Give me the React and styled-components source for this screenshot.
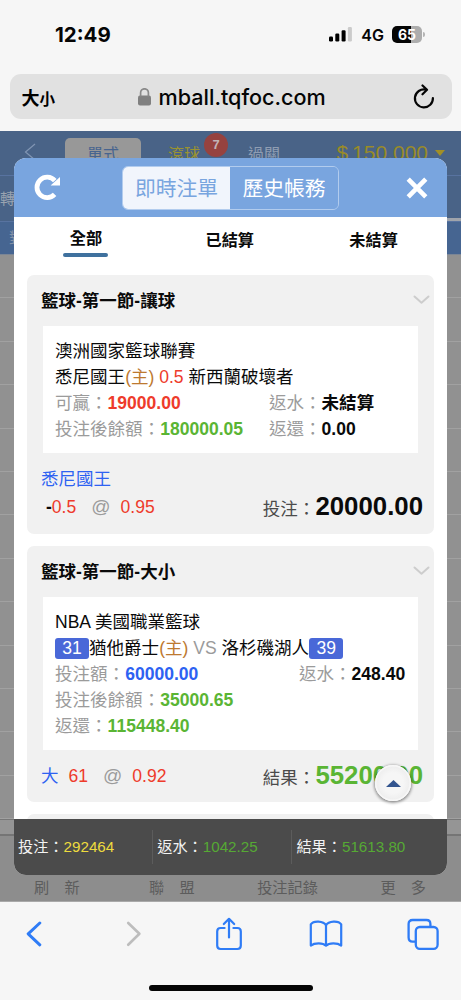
import React from "react";
import styled, { createGlobalStyle } from "styled-components";

const App = () => {
  return (
    <Phone>
      <GlobalStyle />
      <StatusBar>
        <Clock>12:49</Clock>
        <Signal viewBox="0 0 23 15">
          <rect x="0" y="9.5" width="4" height="5" rx="1.2" />
          <rect x="6.3" y="6.5" width="4" height="8" rx="1.2" />
          <rect x="12.6" y="3.2" width="4" height="11.3" rx="1.2" />
          <rect x="18.9" y="0" width="4" height="14.5" rx="1.2" fill="#cbcbcb" />
        </Signal>
        <Network>4G</Network>
        <Battery>65</Battery>
        <BatteryTip />
      </StatusBar>
      <AddressBar>
        <TextSize>
          大<small>小</small>
        </TextSize>
        <Url>
          <svg width="13" height="18" viewBox="0 0 13 18">
            <rect x="0" y="7.6" width="13" height="10" rx="2" fill="#808080" />
            <path
              d="M2.6 8.5V4.7a3.9 3.9 0 0 1 7.8 0v3.8"
              fill="none"
              stroke="#8a8a8a"
              strokeWidth="1.7"
            />
          </svg>
          <span>mball.tqfoc.com</span>
        </Url>
        <svg width="22" height="25" viewBox="0 0 22 25">
          <g fill="none" stroke="#050505" strokeWidth="2.2" strokeLinecap="round" strokeLinejoin="round">
            <path d="M12.9 5.6A9 9 0 1 0 19.9 14" />
            <path d="M9.5 1.5L14 5.8L9.5 10.3" />
          </g>
        </svg>
      </AddressBar>

      <Page>
        <SiteHeader>
          <svg width="12" height="18" viewBox="0 0 12 18">
            <path d="M11 1L1.5 9L11 17" fill="none" stroke="#8195b3" strokeWidth="1.2" />
          </svg>
          <SiteTab $active>單式</SiteTab>
          <SiteTab $live>
            滾球<Count>7</Count>
          </SiteTab>
          <SiteTab>過關</SiteTab>
          <Balance>
            <i>$</i>150,000
          </Balance>
        </SiteHeader>
        <SiteSub>轉</SiteSub>
        <SiteDivider />
        <SiteHead>對</SiteHead>
        <SiteRows>
          {Array.from({ length: 13 }, (_, i) => (
            <SiteRow key={i} />
          ))}
        </SiteRows>
        <SiteStrip />
        <SiteNav>
          <span>刷　新</span>
          <span>聯　盟</span>
          <span>投注記錄</span>
          <span>更　多</span>
        </SiteNav>

        <Modal>
          <ModalHeader>
            <svg width="27" height="27" viewBox="0 0 27 27">
              <path
                d="M20.6 20.4A10.2 10.2 0 1 1 20.8 6.6"
                fill="none"
                stroke="#fff"
                strokeWidth="4.8"
              />
              <path d="M26 3V11.6H16.6Z" fill="#fff" />
            </svg>
            <Segments>
              <Segment $active>即時注單</Segment>
              <Segment>歷史帳務</Segment>
            </Segments>
            <svg width="22" height="22" viewBox="0 0 22 22">
              <path d="M2.2 2.2L19.8 19.8M19.8 2.2L2.2 19.8" stroke="#fff" strokeWidth="4.6" />
            </svg>
          </ModalHeader>
          <Filters>
            <Filter $active>全部</Filter>
            <Filter>已結算</Filter>
            <Filter>未結算</Filter>
          </Filters>
          <Cards>
            <Card>
              <CardTitle>
                籃球-第一節-讓球
                <Chevron />
              </CardTitle>
              <Detail>
                <Line>澳洲國家籃球聯賽</Line>
                <Line>
                  悉尼國王<Home>(主)</Home> <Tint $color="#ee3b2b">0.5</Tint> 新西蘭破壞者
                </Line>
                <Line>
                  <Pair>
                    可贏：<Value $color="#ee3b2b">19000.00</Value>
                  </Pair>
                  <Pair $width={137}>
                    返水：<Value>未結算</Value>
                  </Pair>
                </Line>
                <Line>
                  <Pair>
                    投注後餘額：<Value $color="#5ab534">180000.05</Value>
                  </Pair>
                  <Pair $width={137}>
                    返還：<Value>0.00</Value>
                  </Pair>
                </Line>
              </Detail>
              <Pick>悉尼國王</Pick>
              <Summary>
                <Odds $indent={5}>
                  <b>-</b>
                  <Tint $color="#ee3b2b">0.5</Tint>
                  <At>@</At>
                  <Tint $color="#ee3b2b">0.95</Tint>
                </Odds>
                <Total>
                  投注：<strong>20000.00</strong>
                </Total>
              </Summary>
            </Card>

            <Card>
              <CardTitle>
                籃球-第一節-大小
                <Chevron />
              </CardTitle>
              <Detail>
                <Line>NBA 美國職業籃球</Line>
                <Line>
                  <Score>31</Score>猶他爵士<Home>(主)</Home> <Tint $color="#9b9b9b">VS</Tint> 洛杉磯湖人
                  <Score>39</Score>
                </Line>
                <Line>
                  <Pair>
                    投注額：<Value $color="#2d62f2">60000.00</Value>
                  </Pair>
                  <Pair $width={107}>
                    返水：<Value>248.40</Value>
                  </Pair>
                </Line>
                <Line>
                  <Pair>
                    投注後餘額：<Value $color="#5ab534">35000.65</Value>
                  </Pair>
                </Line>
                <Line>
                  <Pair>
                    返還：<Value $color="#5ab534">115448.40</Value>
                  </Pair>
                </Line>
              </Detail>
              <Summary $single>
                <Odds>
                  <Tint $color="#2d62f2">大</Tint>
                  <Tint $color="#ee3b2b" $gap={10}>61</Tint>
                  <At>@</At>
                  <Tint $color="#ee3b2b">0.92</Tint>
                </Odds>
                <Total $color="#5ab534">
                  結果：<strong>55200.00</strong>
                </Total>
              </Summary>
            </Card>

            <Card />
          </Cards>
          <TopButton>
            <svg width="15" height="7" viewBox="0 0 15 7">
              <path d="M7.5 0L15 7H0Z" fill="#33558f" />
            </svg>
          </TopButton>
          <Totals>
            <TotalCell $color="#eedb3e">
              投注：<span>292464</span>
            </TotalCell>
            <TotalCell $color="#56a934">
              返水：<span>1042.25</span>
            </TotalCell>
            <TotalCell $color="#56a934">
              結果：<span>51613.80</span>
            </TotalCell>
          </Totals>
        </Modal>
      </Page>

      <Toolbar>
        <ToolButton>
          <svg width="16" height="26" viewBox="0 0 16 26">
            <path d="M13.8 2L2.2 12.8L13.8 23.8" fill="none" stroke="#2f7cf6" strokeWidth="3" strokeLinecap="round" strokeLinejoin="round" />
          </svg>
        </ToolButton>
        <ToolButton $shift={6}>
          <svg width="16" height="26" viewBox="0 0 16 26">
            <path d="M2.2 2L13.4 12.8L2.2 23.8" fill="none" stroke="#bdbdbd" strokeWidth="2.6" strokeLinecap="round" strokeLinejoin="round" />
          </svg>
        </ToolButton>
        <ToolButton>
          <svg width="26" height="34" viewBox="0 0 26 34">
            <g fill="none" stroke="#2f7cf6" strokeWidth="2.2" strokeLinecap="round" strokeLinejoin="round">
              <path d="M8.6 11H4.6Q1.2 11 1.2 14.4V28.6Q1.2 32 4.6 32H21.4Q24.8 32 24.8 28.6V14.4Q24.8 11 21.4 11H17.4" />
              <path d="M13 20.5V2M7.8 7L13 1.8L18.2 7" />
            </g>
          </svg>
        </ToolButton>
        <ToolButton>
          <svg width="34" height="28" viewBox="0 0 34 28">
            <g fill="none" stroke="#2f7cf6" strokeWidth="2.2" strokeLinejoin="round">
              <path d="M17 5.2C14.5.8 4.5.2 1.8 4.4V25.6C5.5 22.6 14 22.6 17 25.6C20 22.6 28.5 22.6 32.2 25.6V4.4C29.5.2 19.5.8 17 5.2Z" />
              <path d="M17 5V25.6" />
            </g>
          </svg>
        </ToolButton>
        <ToolButton>
          <svg width="32" height="32" viewBox="0 0 32 32">
            <g fill="none" stroke="#2f7cf6" strokeWidth="2.3">
              <path d="M8.4 23.6H5.6Q1.6 23.6 1.6 19.6V6Q1.6 2 5.6 2H19.4Q23.4 2 23.4 6V8.4" />
              <rect x="8.8" y="9" width="21.8" height="21.8" rx="4" />
            </g>
          </svg>
        </ToolButton>
      </Toolbar>
      <HomeBar />
    </Phone>
  );
};

//Styled Components
const GlobalStyle = createGlobalStyle`
  * {
    box-sizing: border-box;
  }
  body {
    margin: 0;
    background: #f6f6f6;
    font-family: "Liberation Sans", "Noto Sans CJK TC", sans-serif;
  }
  svg {
    display: block;
    flex: none;
  }
`;

const Phone = styled.div`
  display: flex;
  flex-direction: column;
  width: 461px;
  height: 1000px;
  overflow: hidden;
  background: #f6f6f6;
`;

const StatusBar = styled.div`
  display: flex;
  align-items: center;
  height: 74px;
  flex: none;
  padding: 0 36px 5px 55px;
  font-family: Inter, sans-serif;
  color: #050505;
`;

const Clock = styled.div`
  flex: 1;
  font-size: 20.5px;
  font-weight: 700;
`;

const Signal = styled.svg`
  width: 23px;
  height: 15px;
`;

const Network = styled.div`
  margin: 1px 8px 0 9px;
  font-size: 16px;
  font-weight: 600;
  line-height: 20px;
`;

const Battery = styled.div`
  width: 30px;
  height: 17px;
  border-radius: 5px;
  background: linear-gradient(90deg, #050505 64%, #adadad 64%);
  color: #fff;
  font-size: 14px;
  font-weight: 700;
  line-height: 17px;
  text-align: center;
`;

const BatteryTip = styled.div`
  width: 2px;
  height: 5px;
  margin: 0 0 0 1px;
  border-radius: 0 2px 2px 0;
  background: #b4b4b4;
`;

const AddressBar = styled.div`
  display: flex;
  align-items: center;
  height: 45px;
  flex: none;
  margin: 0 9.5px 12px;
  padding: 0 17px 0 12px;
  border-radius: 11px;
  background: #e1e1e1;
`;

const TextSize = styled.div`
  width: 48px;
  font-size: 18px;
  font-weight: 700;
  white-space: nowrap;
  small {
    font-size: 15.5px;
  }
`;

const Url = styled.div`
  display: flex;
  flex: 1;
  align-items: center;
  padding-left: 68px;
  gap: 8px;
  color: #050505;
  font-family: Inter, sans-serif;
  font-size: 21.6px;
  font-weight: 500;
`;

const Page = styled.div`
  position: relative;
  display: flex;
  flex-direction: column;
  height: 771px;
  flex: none;
  background: #919191;
  overflow: hidden;
`;

const SiteHeader = styled.div`
  display: flex;
  height: 45px;
  flex: none;
  padding: 7px 16px 0 24px;
  border-bottom: 1px solid #5873a0;
  background: #496387;
  > svg {
    margin: 5px 29px 0 0;
  }
`;

const SiteTab = styled.div`
  position: relative;
  width: ${({ $active }) => ($active ? "76px" : "80px")};
  height: 34px;
  border-radius: 5px;
  background: ${({ $active }) => ($active ? "#989898" : "none")};
  color: ${({ $active, $live }) => ($active ? "#47648f" : $live ? "#9a9330" : "#8f9db2")};
  font-size: 16px;
  line-height: 33px;
  text-align: center;
  ${({ $live }) => $live && "margin-left: 3px;"}
`;

const Count = styled.span`
  position: absolute;
  top: -5px;
  right: -4px;
  width: 24px;
  height: 24px;
  border-radius: 50%;
  background: #96423f;
  color: #c3b3b6;
  font-size: 13px;
  font-weight: 700;
  line-height: 24px;
`;

const Balance = styled.div`
  display: flex;
  align-items: flex-start;
  margin-left: auto;
  color: #998b28;
  font-size: 21px;
  line-height: 30px;
  white-space: nowrap;
  i {
    margin-right: 4px;
    font-style: normal;
  }
  &::after {
    content: "";
    margin: 12px 0 0 7px;
    border: 5px solid transparent;
    border-top: 6px solid #a18f26;
    border-bottom: 0;
  }
`;

const SiteSub = styled.div`
  height: 42px;
  flex: none;
  background: #496387;
  color: #9aa3b0;
  font-size: 15px;
  line-height: 46px;
`;

const SiteDivider = styled.div`
  height: 4px;
  flex: none;
  border-bottom: 1px solid #5873a0;
  background: linear-gradient(90deg, #496387 50%, #a0a4ab 50%);
`;

const SiteHead = styled.div`
  height: 33px;
  flex: none;
  padding-left: 9px;
  border-bottom: 1px solid #7b8696;
  background: #466591;
  color: #8492a8;
  font-size: 15px;
  line-height: 32px;
`;

const SiteRows = styled.div`
  flex: 1;
  overflow: hidden;
`;

const SiteRow = styled.div`
  height: 43.4px;
  border-bottom: 1px solid #a1a1a1;
`;

const SiteStrip = styled.div`
  height: 17px;
  flex: none;
  border-top: 1px solid #777;
  border-bottom: 2px solid #757575;
  background: #959595;
`;

const SiteNav = styled.div`
  display: flex;
  align-items: flex-end;
  justify-content: space-between;
  height: 66px;
  flex: none;
  padding: 0 35px 4px 34px;
  border-bottom: 1px solid #a9a9a9;
  background: #8d8d8d;
  color: #5c5c5c;
  font-size: 15.2px;
  span:nth-child(2) {
    margin-left: 7px;
  }
`;

const Modal = styled.div`
  position: absolute;
  top: 27px;
  left: 14px;
  display: flex;
  flex-direction: column;
  width: 433px;
  height: 717px;
  border-radius: 12px;
  background: #fff;
  overflow: hidden;
`;

const ModalHeader = styled.div`
  display: flex;
  align-items: center;
  justify-content: space-between;
  height: 59px;
  flex: none;
  padding: 0 19.5px 0 20px;
  background: #79a5df;
`;

const Segments = styled.div`
  display: flex;
  width: 217px;
  height: 44px;
  margin: 1px 4px 0 -2px;
  border: 1px solid #b2ccee;
  border-radius: 6px;
  overflow: hidden;
`;

const Segment = styled.div`
  flex: 1;
  background: ${({ $active }) => ($active ? "#f1f5fc" : "#79a5df")};
  color: ${({ $active }) => ($active ? "#79a5df" : "#fff")};
  font-size: 20.8px;
  line-height: 44px;
  text-align: center;
`;

const Filters = styled.div`
  display: flex;
  height: 58px;
  flex: none;
  padding-right: 1.5px;
`;

const Filter = styled.div`
  display: flex;
  flex: 1;
  flex-direction: column;
  align-items: center;
  padding-top: ${({ $active }) => ($active ? "9px" : "11px")};
  color: #0a0a0a;
  font-size: 16.2px;
  font-weight: 700;
  line-height: 24px;
  ${({ $active }) =>
    $active &&
    `&::after {
      content: "";
      width: 45px;
      height: 3.5px;
      margin-top: 3px;
      border-radius: 2px;
      background: #3f719e;
    }`}
`;

const Cards = styled.div`
  flex: 1;
  padding: 0 13px;
  overflow: hidden;
`;

const Card = styled.div`
  min-height: 60px;
  margin-bottom: 12.5px;
  border-radius: 7px;
  background: #f1f1f1;
  color: #0a0a0a;
  font-size: 17.55px;
  overflow: hidden;
`;

const CardTitle = styled.div`
  display: flex;
  align-items: center;
  justify-content: space-between;
  height: 51px;
  padding: 0 5px 3px 14px;
  font-size: 17.5px;
  font-weight: 700;
`;

const Chevron = () => (
  <svg width="12" height="12" viewBox="0 0 12 12" overflow="visible">
    <path
      d="M-2.5 3.5L4.5 9.7L11.5 3.5"
      fill="none"
      stroke="#cdcdcd"
      strokeWidth="2"
      strokeLinecap="round"
      strokeLinejoin="round"
    />
  </svg>
);

const Detail = styled.div`
  margin: 0 16px;
  padding: 13px 12px 10px;
  background: #fff;
`;

const Line = styled.div`
  height: 25.9px;
  line-height: 25.9px;
  white-space: nowrap;
  &:has(> div) {
    display: flex;
    justify-content: space-between;
  }
`;

const Pair = styled.div`
  width: ${({ $width }) => ($width ? `${$width}px` : "auto")};
  color: #9b9b9b;
`;

const Value = styled.b`
  color: ${({ $color }) => $color || "#0a0a0a"};
`;

const Tint = styled.span`
  margin-left: ${({ $gap }) => $gap || 0}px;
  color: ${({ $color }) => $color};
`;

const Home = styled.span`
  color: #bd7930;
`;

const Score = styled.span`
  display: inline-block;
  width: 34px;
  height: 21px;
  border-radius: 3px;
  background: #4968d8;
  color: #fff;
  line-height: 21px;
  text-align: center;
`;

const Pick = styled.div`
  padding: 13px 0 0 14px;
  color: #2d62f2;
  line-height: 26px;
`;

const Summary = styled.div`
  display: flex;
  justify-content: space-between;
  height: ${({ $single }) => ($single ? "52px" : "42px")};
  padding: 0 11px 0 14px;
  line-height: ${({ $single }) => ($single ? "52px" : "30px")};
`;

const Odds = styled.div`
  padding-left: ${({ $indent }) => $indent || 0}px;
`;

const At = styled.span`
  margin: 0 10px 0 15px;
  color: #9b9b9b;
  font-size: 19px;
`;

const Total = styled.div`
  margin-top: -1px;
  color: #4b4b4b;
  strong {
    color: ${({ $color }) => $color || "#0a0a0a"};
    font-size: 25.8px;
  }
`;

// floats over the list, just above the totals bar
const TopButton = styled.div`
  position: absolute;
  right: 36px;
  bottom: 74px;
  display: flex;
  align-items: center;
  justify-content: center;
  width: 36px;
  height: 36px;
  border-radius: 50%;
  background: radial-gradient(#f6f6f6 40%, #e4e4e4);
  box-shadow: 0 1px 3px 1px rgba(0, 0, 0, 0.4), inset 0 0 0 1.5px #f7f7f7;
`;

const Totals = styled.div`
  display: flex;
  align-items: center;
  height: 56px;
  flex: none;
  background: #4b4b4b;
`;

const TotalCell = styled.div`
  width: 139.2px;
  height: 34px;
  padding-left: 4px;
  border-right: 1px solid #5c5c5c;
  color: #f3f3f3;
  font-size: 15.2px;
  line-height: 33px;
  &:last-child {
    border: 0;
  }
  span {
    color: ${({ $color }) => $color};
  }
`;

const Toolbar = styled.div`
  display: flex;
  align-items: center;
  justify-content: space-between;
  height: 64px;
  flex: none;
  padding: 0 20px 0 16px;
`;

const ToolButton = styled.div`
  display: flex;
  justify-content: center;
  width: 36px;
  padding-left: ${({ $shift }) => $shift || 0}px;
`;

const HomeBar = styled.div`
  width: 164px;
  height: 6px;
  margin: 19px auto 0;
  border-radius: 3px;
  background: #050505;
`;

export default App;
